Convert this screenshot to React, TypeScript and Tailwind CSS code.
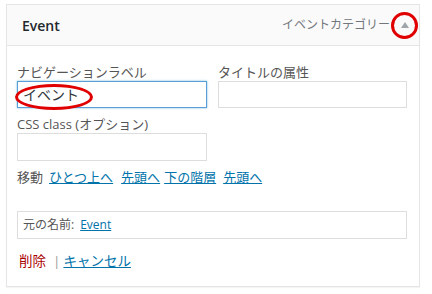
import React from 'react';

const font = "font-['Open_Sans','Noto_Sans_CJK_JP',sans-serif]";

export default function App() {
  return (
    <div className={`w-[432px] h-[294px] bg-white pl-[6px] pt-[4px] ${font} text-[13px] text-[#555]`}>
      <div className="w-[414px] h-[283px] border border-[#e5e5e5] shadow-[0_1px_1px_rgba(0,0,0,0.04)] bg-white flex flex-col">
        {/* header */}
        <div className="h-[41px] shrink-0 bg-[#fafafa] border-b border-[#e5e5e5] flex items-center pl-[15px] pr-[8px]">
          <span className="text-[14px] font-semibold text-[#23282d]">Event</span>
          <span className="ml-auto text-[12px] text-[#72777c] leading-none">イベントカテゴリー</span>
          <span className="relative ml-[9px] w-[12px] h-[12px] flex items-center justify-center">
            <svg width="10" height="8" viewBox="0 0 10 8">
              <path d="M5 1 L9 7 L1 7 Z" fill="#a0a5aa" />
            </svg>
            <span className="absolute left-[-8px] top-[-7px] w-[27px] h-[27px] rounded-full border-[3px] border-[#e00000]" />
          </span>
        </div>

        {/* body */}
        <div className="pl-[10px] pr-[12px] pt-[17px] flex flex-col">
          <div className="flex gap-[11px]">
            <div className="w-[190px]">
              <div className="leading-[18px]">ナビゲーションラベル</div>
              <div className="relative h-[27px] border border-[#5b9dd9] shadow-[0_0_2px_rgba(30,140,190,0.6)] flex items-center pl-[5px] text-[14px] text-[#32373c]">
                イベント
                <span className="absolute left-[-3px] top-[2px] w-[78px] h-[26px] rounded-[50%] border-[3px] border-[#e00000]" />
              </div>
            </div>
            <div className="w-[189px]">
              <div className="leading-[18px]">タイトルの属性</div>
              <div className="h-[27px] border border-[#ddd]" />
            </div>
          </div>

          <div className="mt-[7px] leading-[18px]">CSS class (オプション)</div>
          <div className="w-[190px] h-[28px] border border-[#ddd]" />

          <div className="mt-[7px] leading-[18px] flex">
            <span>移動</span>
            <a className="ml-[6px] text-[#0073aa] underline">ひとつ上へ</a>
            <a className="ml-[8px] text-[#0073aa] underline">先頭へ</a>
            <a className="ml-[4px] text-[#0073aa] underline">下の階層</a>
            <a className="ml-[7px] text-[#0073aa] underline">先頭へ</a>
          </div>

          <div className="mt-[25px] h-[28px] w-[390px] border border-[#ddd] flex items-center pl-[5px] text-[12px] text-[#555]">
            元の名前:
            <a className="ml-[6px] text-[#0073aa] underline">Event</a>
          </div>

          <div className="mt-[13px] leading-[18px] flex items-center pl-[2px] text-[13.5px]">
            <a className="text-[#a00]">削除</a>
            <span className="ml-[7px] mr-[3px] text-[#999]">|</span>
            <a className="text-[#0073aa] underline">キャンセル</a>
          </div>
        </div>
      </div>
    </div>
  );
}
